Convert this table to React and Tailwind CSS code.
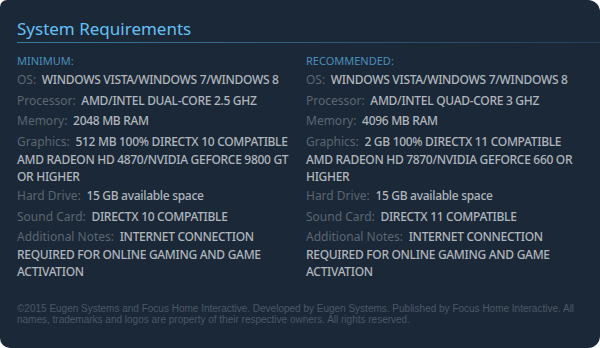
import React from "react";

const minReq = [
  ["OS:", ["WINDOWS VISTA/WINDOWS 7/WINDOWS 8"]],
  ["Processor:", ["AMD/INTEL DUAL-CORE 2.5 GHZ"]],
  ["Memory:", ["2048 MB RAM"]],
  ["Graphics:", ["512 MB 100% DIRECTX 10 COMPATIBLE", "AMD RADEON HD 4870/NVIDIA GEFORCE 9800 GT", "OR HIGHER"]],
  ["Hard Drive:", ["15 GB available space"]],
  ["Sound Card:", ["DIRECTX 10 COMPATIBLE"]],
  ["Additional Notes:", ["INTERNET CONNECTION", "REQUIRED FOR ONLINE GAMING AND GAME", "ACTIVATION"]],
];
const recReq = [
  ["OS:", ["WINDOWS VISTA/WINDOWS 7/WINDOWS 8"]],
  ["Processor:", ["AMD/INTEL QUAD-CORE 3 GHZ"]],
  ["Memory:", ["4096 MB RAM"]],
  ["Graphics:", ["2 GB 100% DIRECTX 11 COMPATIBLE", "AMD RADEON HD 7870/NVIDIA GEFORCE 660 OR", "HIGHER"]],
  ["Hard Drive:", ["15 GB available space"]],
  ["Sound Card:", ["DIRECTX 11 COMPATIBLE"]],
  ["Additional Notes:", ["INTERNET CONNECTION", "REQUIRED FOR ONLINE GAMING AND GAME", "ACTIVATION"]],
];

function Column({ title, rows }) {
  return (
    <div className="flex flex-col">
      <div className="text-[11px] leading-[14px] text-[#4a8fbb] uppercase mb-[2px]">{title}</div>
      <ul className="flex flex-col gap-[1.5px]">
        {rows.map(([k, lines]) => (
          <li key={k} className="text-[12px] text-[#b0b6bc] font-medium tracking-[-0.3px] whitespace-nowrap">
            <div className="leading-[19px]">
              <span className="text-[#5c6670] font-normal tracking-normal">{k}</span>&nbsp; {lines[0]}
            </div>
            {lines.slice(1).map((l) => (
              <div key={l} className="leading-[17px]">{l}</div>
            ))}
          </li>
        ))}
      </ul>
    </div>
  );
}

export default function App() {
  return (
    <div className="w-[600px] h-[348px] bg-white">
      <div
        className="w-[600px] h-[348px] bg-[#1b2838] rounded-tl-[7px] rounded-tr-[12px] rounded-bl-[10px] rounded-br-[12px] overflow-hidden pl-[17px] pt-[17px] flex flex-col"
        style={{ fontFamily: '"Noto Sans", "Open Sans", sans-serif' }}
      >
        <div className="text-[17px] leading-[24px] text-[#66c0f4] pb-[1px]">
          System Requirements
        </div>
        <div className="h-px bg-gradient-to-r from-[#3a7aa3] to-[#26405a]" />
        <div className="pr-[17px] mt-[11px] grid grid-cols-2 gap-x-[12px]">
          <Column title="Minimum:" rows={minReq} />
          <Column title="Recommended:" rows={recReq} />
        </div>
        <div
          className="mt-auto mb-[23px] pr-[8px] text-[10px] leading-[11px] text-[#4c5866]"
          style={{ fontFamily: '"Liberation Sans", Arial, sans-serif' }}
        >
          ©2015 Eugen Systems and Focus Home Interactive. Developed by Eugen Systems. Published by Focus Home Interactive. All names, trademarks and logos are property of their respective owners. All rights reserved.
        </div>
      </div>
    </div>
  );
}
